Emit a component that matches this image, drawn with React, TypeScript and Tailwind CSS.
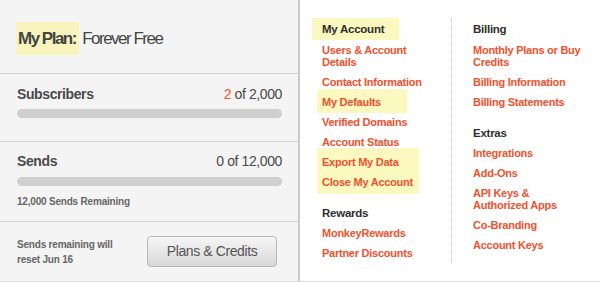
import React from 'react';

const linkCls = 'block text-[11px] leading-[12px] font-bold tracking-[-0.25px] text-[#f2512d]';
const headCls = 'py-[4px] text-[11.5px] leading-[14px] font-bold tracking-[-0.25px] text-[#2e2e2e]';

function Link({ children }: { children: React.ReactNode }) {
  return <a className={linkCls}>{children}</a>;
}

function UsageRow({ label, used, total }: { label: string; used: string; total: string }) {
  return (
    <>
      <div className="flex justify-between text-[14px] leading-[16px] text-[#4a4a4a]">
        <span className="font-bold tracking-[-0.4px]">{label}</span>
        <span className="tracking-[-0.4px]">
          <span className={used === '0' ? '' : 'text-[#f2512d]'}>{used}</span> of {total}
        </span>
      </div>
      <div className="h-[9px] rounded-full bg-[#cfcfcf]" />
    </>
  );
}

export default function App() {
  return (
    <div className="flex h-[282px] w-[600px] border-b border-[#dcdcdc] bg-white font-['Liberation_Sans',Arial,sans-serif]">
      {/* plan summary */}
      <div className="flex w-[300px] flex-col border-r-2 border-[#cacaca] bg-[#f4f4f4]">
        <div className="h-[74px] border-b border-[#d2d2d2] pl-[16px] pt-[22px]">
          <div className="text-[17px] leading-[33px] tracking-[-1.5px] text-[#444]">
            <span className="inline-block bg-[#f8f4bb] pl-[2px] pr-[3px] font-bold">My Plan:</span> Forever Free
          </div>
        </div>

        <div className="flex h-[68px] flex-col border-b border-[#d2d2d2] pl-[17px] pr-[16px] pt-[12px]">
          <div className="flex flex-col gap-[7px]">
            <UsageRow label="Subscribers" used="2" total="2,000" />
          </div>
        </div>

        <div className="flex h-[80px] flex-col border-b border-[#d2d2d2] pl-[17px] pr-[16px] pt-[11px]">
          <div className="flex flex-col gap-[8px]">
            <UsageRow label="Sends" used="0" total="12,000" />
          </div>
          <p className="mt-[10px] text-[10px] font-bold leading-[12px] tracking-[-0.2px] text-[#666]">
            12,000 Sends Remaining
          </p>
        </div>

        <div className="flex flex-1 items-center pl-[17px] pr-[21px]">
          <p className="w-[125px] text-[10px] font-bold leading-[15px] tracking-[-0.2px] text-[#666]">
            Sends remaining will
            <br />
            reset Jun 16
          </p>
          <button className="ml-auto h-[31px] w-[130px] rounded-[4px] border border-[#b8b8b8] bg-gradient-to-b from-[#f6f6f6] to-[#d8d8d8] text-[14px] tracking-[-0.4px] text-[#555] shadow-[0_1px_0_rgba(255,255,255,0.8)]">
            Plans &amp; Credits
          </button>
        </div>
      </div>

      {/* account links */}
      <div className="flex flex-1">
        <div className="w-[151px] pl-[22px] pt-[18px]">
          <div className={`${headCls} -ml-[10px] w-[87px] bg-[#fbf8c0] pl-[10px]`}>My Account</div>
          <div className="mt-[4px] flex flex-col gap-[8px]">
            <Link>
              Users &amp; Account
              <br />
              Details
            </Link>
            <Link>Contact Information</Link>
            <div className="-mb-[5px] -ml-[5px] -mt-[7px] w-[90px] bg-[#fbf8c0] pb-[5px] pl-[5px] pt-[7px]">
              <Link>My Defaults</Link>
            </div>
            <Link>Verified Domains</Link>
            <Link>Account Status</Link>
            <div className="-mb-[6px] -ml-[5px] -mt-[8px] flex w-[102px] flex-col gap-[8px] bg-[#fbf8c0] pb-[6px] pl-[5px] pt-[8px]">
              <Link>Export My Data</Link>
              <Link>Close My Account</Link>
            </div>
          </div>
          <div className={`${headCls} mt-[14px]`}>Rewards</div>
          <div className="mt-[3px] flex flex-col gap-[8px]">
            <Link>MonkeyRewards</Link>
            <Link>Partner Discounts</Link>
          </div>
        </div>

        <div className="mt-[18px] h-[245px] flex-1 border-l border-dotted border-[#c4c4c4] pl-[21px]">
          <div className={headCls}>Billing</div>
          <div className="mt-[4px] flex flex-col gap-[8px]">
            <Link>
              Monthly Plans or Buy
              <br />
              Credits
            </Link>
            <Link>Billing Information</Link>
            <Link>Billing Statements</Link>
          </div>
          <div className={`${headCls} mt-[14px]`}>Extras</div>
          <div className="mt-[3px] flex flex-col gap-[8px]">
            <Link>Integrations</Link>
            <Link>Add-Ons</Link>
            <Link>
              API Keys &amp;
              <br />
              Authorized Apps
            </Link>
            <Link>Co-Branding</Link>
            <Link>Account Keys</Link>
          </div>
        </div>
      </div>
    </div>
  );
}
